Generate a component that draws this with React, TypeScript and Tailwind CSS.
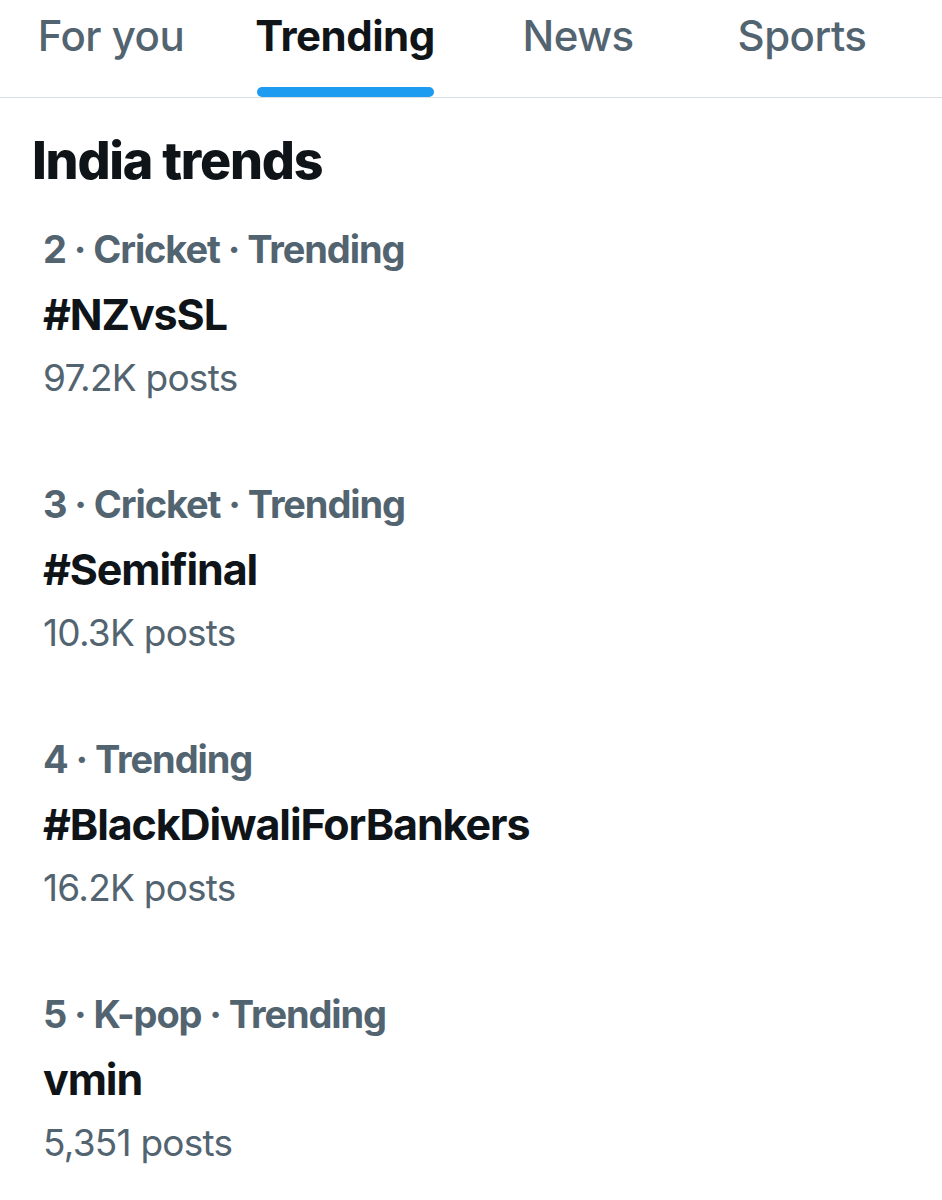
import React from "react";

const tabs = [
  { label: "For you", w: "w-[222px]", active: false },
  { label: "Trending", w: "w-[246px]", active: true },
  { label: "News", w: "w-[220px]", active: false },
  { label: "Sports", w: "w-[228px]", active: false },
];

const trends = [
  { meta: "2 · Cricket · Trending", title: "#NZvsSL", posts: "97.2K posts" },
  { meta: "3 · Cricket · Trending", title: "#Semifinal", posts: "10.3K posts" },
  { meta: "4 · Trending", title: "#BlackDiwaliForBankers", posts: "16.2K posts" },
  { meta: "5 · K-pop · Trending", title: "vmin", posts: "5,351 posts" },
];

export default function App() {
  return (
    <div
      className="w-[942px] h-[1200px] bg-white overflow-hidden"
      style={{ fontFamily: "Inter, 'Noto Sans', sans-serif" }}
    >
      <div className="flex h-[98px] border-b border-[#d9dfe2]">
        {tabs.map((t) => (
          <div key={t.label} className={`${t.w} flex flex-col items-center`}>
            <div
              className={`pt-[10px] text-[42px] leading-[52px] tracking-[-0.5px] ${
                t.active ? "font-bold text-[#0f1419]" : "font-medium text-[#536471]"
              }`}
            >
              {t.label}
            </div>
            <div className="flex-1" />
            {t.active ? (
              <div className="w-[177px] h-[10px] rounded-full bg-[#1d9bf0]" />
            ) : null}
          </div>
        ))}
      </div>
      <div className="pl-[32px] pt-[31px] text-[52px] leading-[64px] font-extrabold text-[#0f1419] tracking-[-1.25px]">
        India trends
      </div>
      <div className="pl-[43px] pt-[32px]">
        {trends.map((t) => (
          <div key={t.title} className="h-[255px]">
            <div className="text-[38px] leading-[48px] font-bold text-[#536471] tracking-[-1.1px]">
              {t.meta}
            </div>
            <div className="mt-[13px] text-[43px] leading-[56px] font-bold text-[#0f1419] tracking-[-1.1px]">
              {t.title}
            </div>
            <div className="mt-[12px] text-[37px] leading-[48px] font-normal text-[#536471] tracking-[-0.75px]">
              {t.posts}
            </div>
          </div>
        ))}
      </div>
    </div>
  );
}
